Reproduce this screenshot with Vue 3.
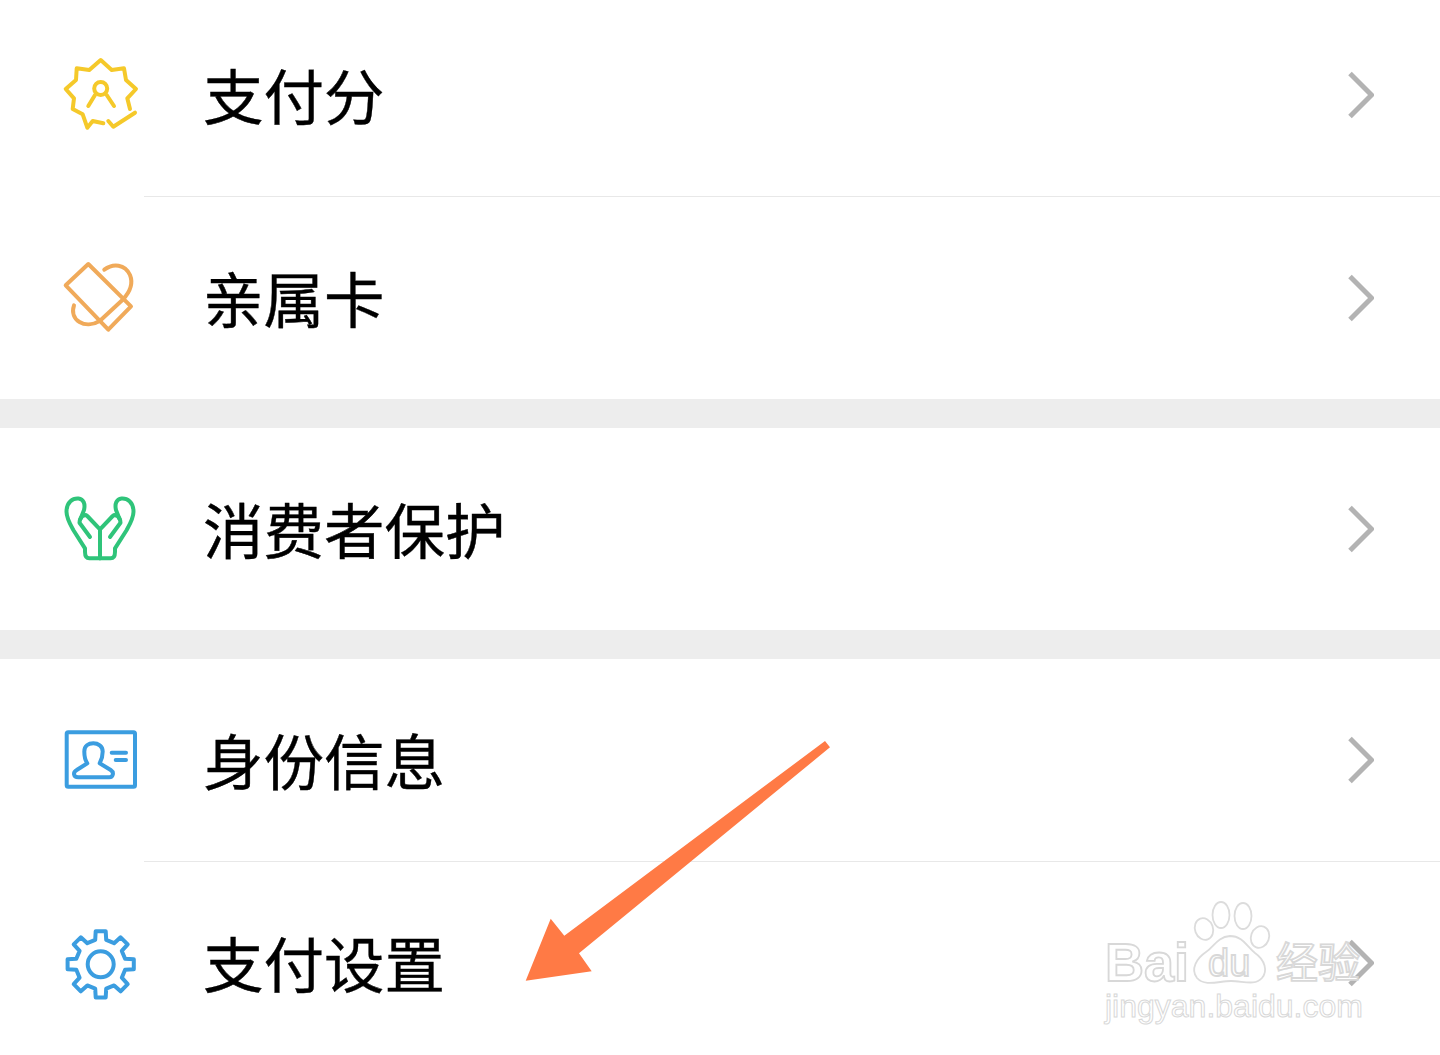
<template>
  <div class="screen">
    <div class="settings-list">
      <section v-for="(group, groupIndex) in groups" :key="groupIndex" class="group">
        <div v-for="item in group" :key="item.label" class="row">
          <svg class="row-icon" :style="{ color: item.color }" viewBox="0 0 80 80" width="80" height="80" fill="none" stroke="currentColor" stroke-width="4" stroke-linecap="round" stroke-linejoin="round">
            <template v-if="item.icon === 'score'">
              <path d="M42.3 68.3 31.7 66 26.3 72.7 21.7 59.3 11.7 54 13 43.3 4.7 34 15 25 15.7 13.3 28.3 15 39.7 5 50.7 15 63 13.3 65 25 75 34 66.3 43.3 69 54" />
              <circle cx="39.7" cy="33.5" r="6.5" />
              <path d="M34 40 27.3 51M45.7 40 53 51M47.3 66 52.3 71.7 74 57.7" />
            </template>
            <template v-else-if="item.icon === 'card'">
              <path d="M27.3 6 4.7 27.3 47.3 71.7 70 48.3Z" />
              <path d="M61.7 41.7 39 62.7M43.3 11.7C52 5 64 6 69 17 73 27 68 35 61.7 41.7M13 47.3C8 62 24 72 39 62.7" />
            </template>
            <template v-else-if="item.icon === 'hands'">
              <g v-for="side in handSides" :key="side" :transform="side">
                <path d="M39 69.3H28.3C25.5 69.3 24 67 24 62.7V59.3L12.3 41C9 35 5.5 29 5.5 22.7 5.5 12.7 12 9 17.5 9.5 22.5 10 24.5 15 23 21L19.5 30" />
                <path d="M29 48 18.5 33.7C18.5 28 23.5 24.5 26.3 27L39 40.3V69.3" />
              </g>
            </template>
            <template v-else-if="item.icon === 'id'">
              <rect x="5.7" y="12.3" width="68.3" height="54.4" rx="1.5" />
              <path d="M26.3 43.3C24 40 23.3 34 23.3 31.5 23.3 26 27.5 23.3 32.3 23.3 37 23.3 41.7 26 41.7 31.5 41.7 34 40.5 40 38.7 43.3L49.7 50C53.5 52.5 52 57.3 48.3 57.3H17.3C12.5 57.3 11.5 52.5 15.7 50Z" />
              <path d="M50.7 32.7H65M54.7 40H65" />
            </template>
            <template v-else>
              <path :d="gearPath" />
              <circle cx="39.7" cy="41.3" r="13" />
            </template>
          </svg>
          <span class="row-label">{{ item.label }}</span>
          <svg class="row-arrow" viewBox="0 0 30 50" width="30" height="50" fill="none" stroke="#b3b3b3" stroke-width="5">
            <path d="M6 3.5 27.5 25 6 46.5" />
          </svg>
        </div>
      </section>
    </div>

    <svg class="overlay" width="1440" height="1055" viewBox="0 0 1440 1055">
      <g fill="#fff" stroke="#dcdcdc" stroke-width="1.8">
        <ellipse cx="1204" cy="929" rx="9" ry="11" transform="rotate(-20 1204 929)" />
        <ellipse cx="1221" cy="915" rx="8.5" ry="13" />
        <ellipse cx="1243" cy="916" rx="8.5" ry="13" />
        <ellipse cx="1260" cy="937" rx="9" ry="11" transform="rotate(20 1260 937)" />
        <path d="M1197 978C1190 969 1197 958 1206 952 1214 947 1217 937 1230 936 1243 936 1247 947 1255 953 1265 960 1268 971 1262 978 1255 986 1243 981 1231 981 1219 981 1205 987 1197 978Z" />
      </g>
      <g class="mark" fill="#fff" stroke="#d8d8d8" stroke-width="1.8">
        <text x="1105" y="981" font-size="54" font-weight="700">Bai</text>
        <text x="1208" y="976" font-size="38">du</text>
        <text x="1276" y="978" font-size="42">经验</text>
        <text x="1105" y="1017" font-size="32" stroke-width="1">jingyan.baidu.com</text>
      </g>
      <polygon fill="#ff7a45" points="525.7,980.7 591.7,971.3 579,953.3 830,747.3 825,741 564.3,935.7 550.7,918.7" />
    </svg>
  </div>
</template>

<script setup>
const groups = [
  [
    { label: '支付分', icon: 'score', color: '#f5c92a' },
    { label: '亲属卡', icon: 'card', color: '#f0aa5a' },
  ],
  [{ label: '消费者保护', icon: 'hands', color: '#2fc47a' }],
  [
    { label: '身份信息', icon: 'id', color: '#3b9de0' },
    { label: '支付设置', icon: 'gear', color: '#3b9de0' },
  ],
]

// the right hand is the left one mirrored on the icon's centre line
const handSides = ['matrix(1 0 0 1 0 0)', 'matrix(-1 0 0 1 78 0)']

// eight teeth around the centre of the 80x80 icon box
function buildGear(cx, cy, outer, inner) {
  const points = []
  for (let i = 0; i < 8; i++) {
    const mid = (i * Math.PI) / 4 - Math.PI / 2
    const at = (r, offset) => {
      const x = cx + r * Math.cos(mid + offset)
      const y = cy + r * Math.sin(mid + offset)
      return x.toFixed(1) + ' ' + y.toFixed(1)
    }
    points.push(at(inner, -0.22), at(outer, -0.15), at(outer, 0.15), at(inner, 0.22))
  }
  return 'M' + points.join('L') + 'Z'
}

const gearPath = buildGear(39.7, 41.3, 33.5, 25)
</script>

<style scoped>
.screen { position: relative; width: 1440px; height: 1055px; overflow: hidden; background: #ededed; font-family: "Noto Sans CJK SC", "Liberation Sans", sans-serif; }
.settings-list { display: flex; flex-direction: column; gap: 29px; margin-top: -6px; }
.group { background: #fff; }
.row { display: flex; align-items: center; height: 202px; padding: 0 66px 0 61px; border-top: 1px solid transparent; position: relative; }
.row:first-child { border-top: 0; }
.row:not(:first-child)::before { content: ""; position: absolute; top: -1px; left: 144px; right: 0; height: 1px; background: #e8e8e8; }
.row-icon { flex: none; }
.row-label { flex: 1; margin: 0 0 3px 62px; color: #000; font-size: 60.5px; line-height: 80px; -webkit-text-stroke: 0.4px #000; }
.row-arrow { flex: none; }
.overlay { position: absolute; inset: 0; pointer-events: none; }
.mark text { font-family: "Liberation Sans", "Noto Sans CJK SC", sans-serif; }
</style>

<style>
body { background: #fff; }
</style>
